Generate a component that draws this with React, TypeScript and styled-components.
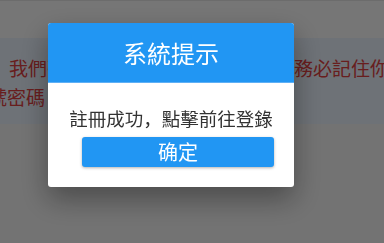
import React from 'react'
import styled, { createGlobalStyle } from 'styled-components'

const GlobalStyle = createGlobalStyle`
  html, body {
    margin: 0;
    padding: 0;
    background: #e6e6e6;
    font-family: "Noto Sans CJK SC", "Noto Sans", sans-serif;
  }
`

const Page = styled.div`
  width: 384px;
  height: 243px;
  overflow: hidden;
  background: #e6e6e6;
`

const TopBar = styled.div`
  height: 38px;
  background: #ececec;
  border-top: 1px solid #d8d8d8;
  box-sizing: border-box;
`

const Notice = styled.div`
  height: 86px;
  background: #dce4ee;
  padding-top: 15px;
  box-sizing: border-box;
  overflow: hidden;
`

const NoticeLine = styled.div<{ $indent: number }>`
  white-space: nowrap;
  font-family: "Noto Sans CJK TC", sans-serif;
  font-size: 19px;
  line-height: 29px;
  color: #d03c3c;
  margin-left: ${p => p.$indent}px;
`

const Mask = styled.div`
  position: fixed;
  inset: 0;
  background: rgba(0, 0, 0, 0.5);
  padding: 23px 0 0 48px;
  box-sizing: border-box;
`

const Dialog = styled.div`
  width: 246px;
  background: #fff;
  border-radius: 3px;
  overflow: hidden;
  box-shadow: 0 12px 28px rgba(0, 0, 0, 0.35);
`

const Header = styled.div`
  height: 60px;
  background: #2196f3;
  border-bottom: 1px solid #5fb0f5;
  box-sizing: border-box;
  display: flex;
  align-items: center;
  justify-content: center;
  color: #fff;
  font-size: 24px;
`

const Body = styled.div`
  height: 104px;
  display: flex;
  flex-direction: column;
  align-items: center;
  padding-top: 22px;
  box-sizing: border-box;
`

const Message = styled.div`
  font-size: 18.5px;
  line-height: 26px;
  color: #333;
`

const ConfirmButton = styled.button`
  margin: 6px 0 0 14px;
  width: 192px;
  height: 30px;
  border: none;
  border-radius: 3px;
  background: #2196f3;
  color: #fff;
  font-family: inherit;
  font-size: 20px;
  line-height: 30px;
  padding: 0;
  box-shadow: 0 1px 3px rgba(0, 0, 0, 0.3);
`

export default function App() {
  return (
    <>
      <GlobalStyle />
      <Page>
        <TopBar />
        <Notice>
          <NoticeLine $indent={9}>我們強烈建議您在完成註冊之後，務必記住你的帳</NoticeLine>
          <NoticeLine $indent={-12}>號密碼，以免日後無法登錄</NoticeLine>
        </Notice>
      </Page>
      <Mask>
        <Dialog>
          <Header>系統提示</Header>
          <Body>
            <Message>註冊成功，點擊前往登錄</Message>
            <ConfirmButton>确定</ConfirmButton>
          </Body>
        </Dialog>
      </Mask>
    </>
  )
}
